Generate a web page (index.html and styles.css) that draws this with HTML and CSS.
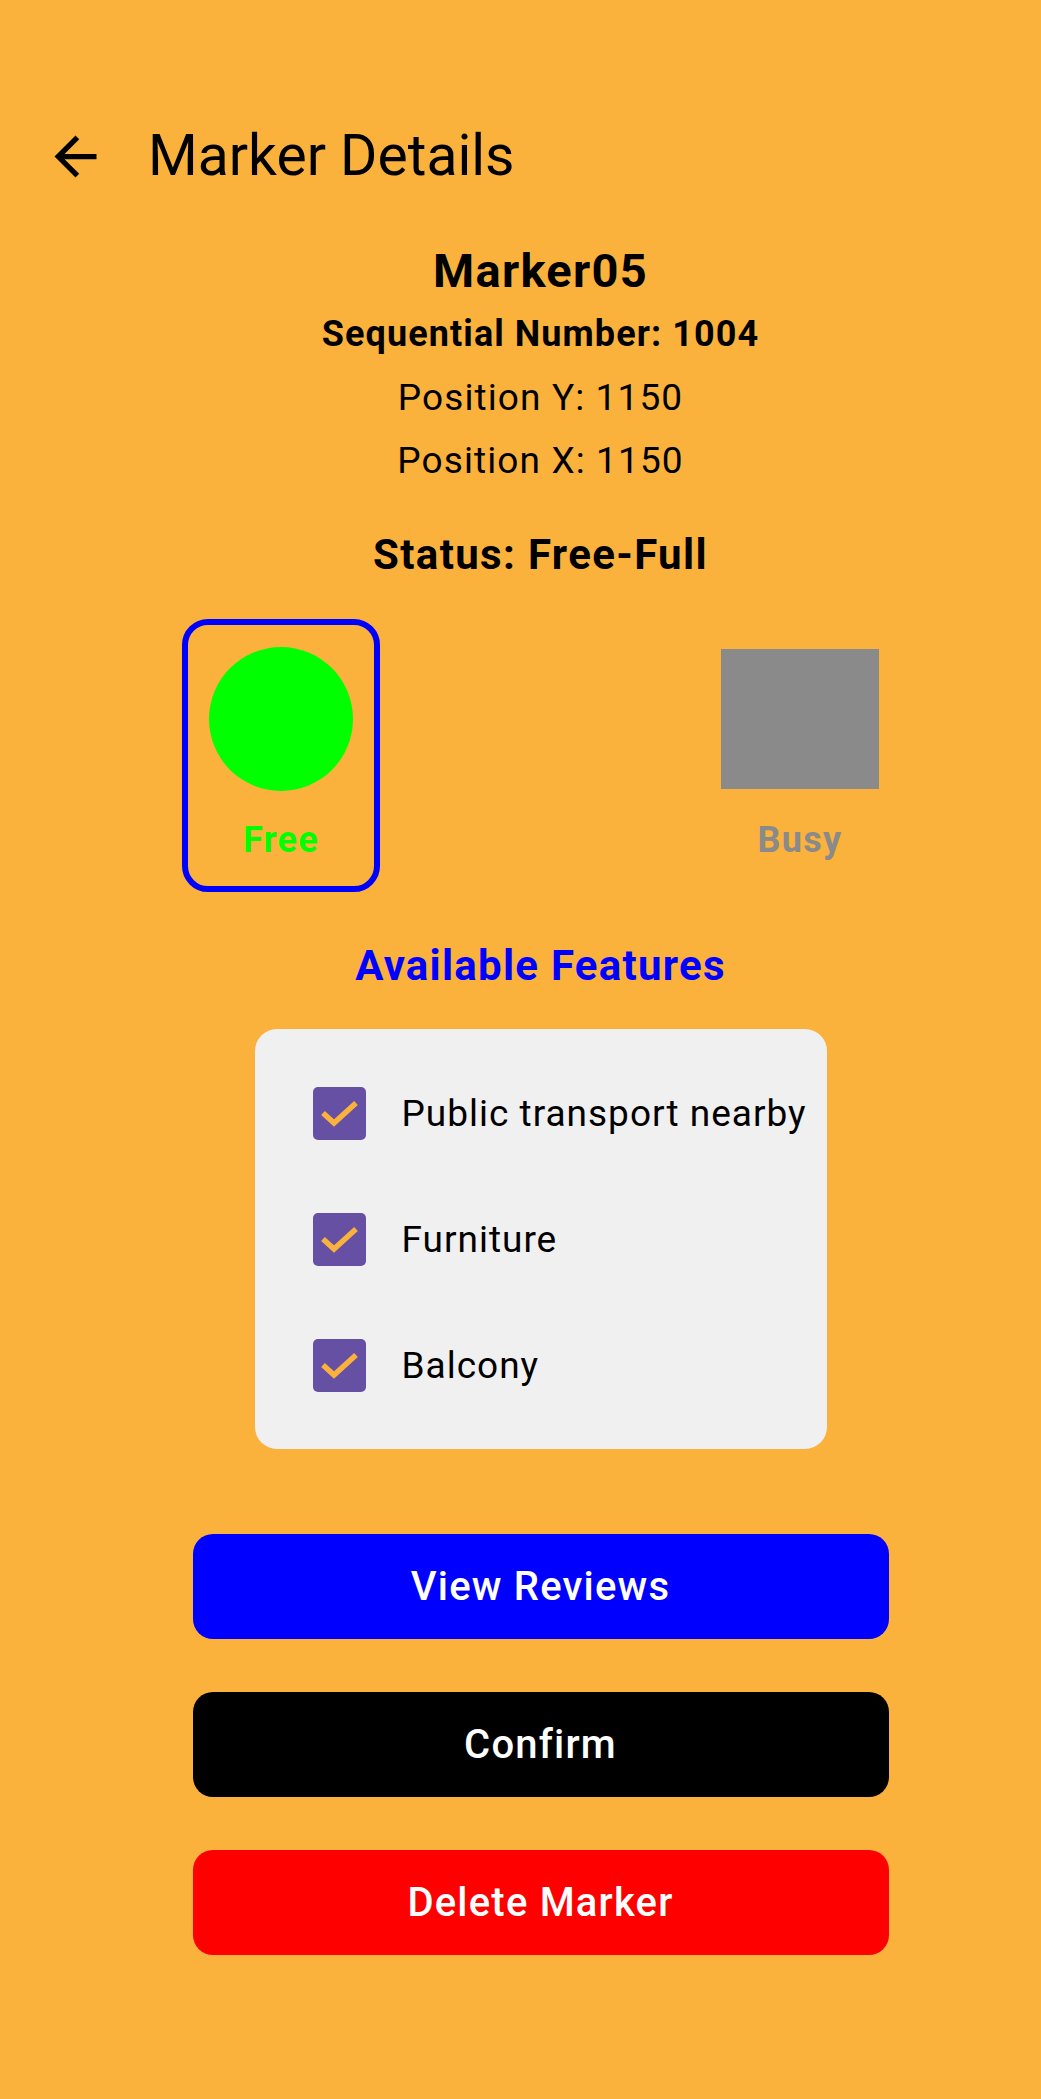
FILE: index.html
```html
<!DOCTYPE html>
<html lang="en">
<head>
<meta charset="utf-8">
<title>Marker Details</title>
<link rel="stylesheet" href="styles.css">
</head>
<body>
<header class="toolbar">
  <button class="back" aria-label="Back">
    <svg viewBox="0 0 24 24" width="63" height="63"><path d="M20 11H7.83l5.59-5.59L12 4l-8 8 8 8 1.41-1.41L7.83 13H20v-2z" fill="#000"/></svg>
  </button>
  <h1 class="title">Marker Details</h1>
</header>
<main class="content">
  <h2 class="name">Marker05</h2>
  <p class="seq">Sequential Number: 1004</p>
  <p class="pos">Position Y: 1150</p>
  <p class="pos">Position X: 1150</p>
  <p class="status">Status: Free-Full</p>

  <div class="options">
    <div class="option option-free">
      <div class="circle"></div>
      <span class="opt-label free-label">Free</span>
    </div>
    <div class="option option-busy">
      <div class="square"></div>
      <span class="opt-label busy-label">Busy</span>
    </div>
  </div>

  <h3 class="features-title">Available Features</h3>
  <div class="card">
    <label class="check-row">
      <span class="box"><svg viewBox="0 0 53 53" width="53" height="53"><polyline points="10,26 21,36 43,16" fill="none" stroke="#FAB23C" stroke-width="5.5"/></svg></span>
      <span class="check-label">Public transport nearby</span>
    </label>
    <label class="check-row">
      <span class="box"><svg viewBox="0 0 53 53" width="53" height="53"><polyline points="10,26 21,36 43,16" fill="none" stroke="#FAB23C" stroke-width="5.5"/></svg></span>
      <span class="check-label">Furniture</span>
    </label>
    <label class="check-row">
      <span class="box"><svg viewBox="0 0 53 53" width="53" height="53"><polyline points="10,26 21,36 43,16" fill="none" stroke="#FAB23C" stroke-width="5.5"/></svg></span>
      <span class="check-label">Balcony</span>
    </label>
  </div>

  <div class="actions">
    <button class="btn btn-blue">View Reviews</button>
    <button class="btn btn-black">Confirm</button>
    <button class="btn btn-red">Delete Marker</button>
  </div>
</main>
</body>
</html>
```
FILE: styles.css
```css
* { box-sizing: border-box; }
html, body { margin: 0; padding: 0; }
body {
  background: #FAB23C;
  font-family: Roboto, "Noto Sans", sans-serif;
  color: #000;
  width: 1041px;
  min-height: 2099px;
}
.toolbar {
  display: flex;
  align-items: center;
  height: 147px;
  margin-top: 83px;
  padding-left: 44px;
}
.back {
  width: 63px;
  height: 63px;
  padding: 0;
  border: 0;
  background: none;
  display: flex;
}
.title {
  margin: 0 0 0 41px;
  font-size: 57px;
  font-weight: 400;
  line-height: 1.172;
}
.content {
  padding-left: 40px;
  display: flex;
  flex-direction: column;
  align-items: center;
  text-align: center;
}
.name {
  margin: 11px 0 0;
  font-size: 47px;
  font-weight: 700;
  line-height: 60px;
  letter-spacing: 0.027em;
}
.seq {
  margin: 2px 0 0;
  font-size: 36px;
  font-weight: 700;
  line-height: 63px;
  letter-spacing: 0.03em;
}
.pos {
  margin: 0;
  font-size: 37px;
  font-weight: 400;
  line-height: 63px;
  letter-spacing: 0.03em;
}
.status {
  margin: 33px 0 0;
  font-size: 42px;
  font-weight: 700;
  line-height: 60px;
  letter-spacing: 0.032em;
}
.options {
  align-self: stretch;
  display: flex;
  justify-content: space-between;
  align-items: flex-start;
  padding: 0 162px 0 142px;
  margin-top: 34px;
}
.option {
  display: flex;
  flex-direction: column;
  align-items: center;
}
.option-free {
  width: 198px;
  border: 6px solid #0000FF;
  border-radius: 26px;
  padding: 22px 21px;
}
.circle {
  width: 144px;
  height: 144px;
  border-radius: 50%;
  background: #00FF00;
  margin-bottom: 25px;
}
.option-busy {
  width: 158px;
  padding-top: 30px;
}
.square {
  width: 158px;
  height: 140px;
  background: #8A8A8A;
  margin-bottom: 27px;
}
.opt-label {
  font-size: 36px;
  font-weight: 700;
  line-height: 48px;
  letter-spacing: 0.035em;
}
.free-label { color: #00FF00; }
.busy-label { color: #8A8A8A; }
.features-title {
  margin: 46px 0 0;
  font-size: 42px;
  font-weight: 700;
  line-height: 56px;
  letter-spacing: 0.03em;
  color: #0000FF;
}
.card {
  margin-top: 35px;
  width: 572px;
  padding: 21px 0;
  background: #F0F0F0;
  border-radius: 22px;
  text-align: left;
}
.check-row {
  height: 126px;
  display: flex;
  align-items: center;
  padding-left: 58px;
  gap: 36px;
}
.box {
  width: 53px;
  height: 53px;
  border-radius: 5px;
  background: #6650A4;
  display: flex;
  flex: none;
}
.check-label {
  font-size: 37px;
  font-weight: 400;
  letter-spacing: 0.027em;
}
.actions {
  margin-top: 85px;
  width: 696px;
  display: flex;
  flex-direction: column;
  gap: 53px;
}
.btn {
  height: 105px;
  border: 0;
  border-radius: 20px;
  color: #fff;
  font-family: Roboto, "Noto Sans", sans-serif;
  font-size: 40px;
  font-weight: 500;
  letter-spacing: 0.03em;
}
.btn-blue { background: #0000FF; }
.btn-black { background: #000; }
.btn-red { background: #FF0000; }
```
